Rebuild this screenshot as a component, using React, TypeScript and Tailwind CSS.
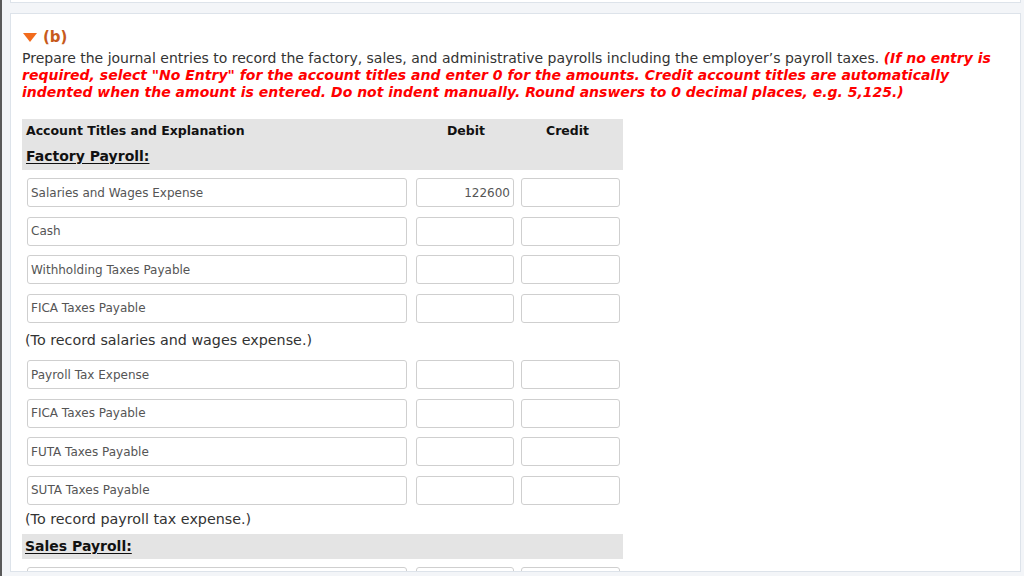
const FONT = "font-['DejaVu_Sans',Verdana,sans-serif]";

type Row = { title: string; debit?: string };

const salaryRows: Row[] = [
  { title: 'Salaries and Wages Expense', debit: '122600' },
  { title: 'Cash' },
  { title: 'Withholding Taxes Payable' },
  { title: 'FICA Taxes Payable' },
];

const taxRows: Row[] = [
  { title: 'Payroll Tax Expense' },
  { title: 'FICA Taxes Payable' },
  { title: 'FUTA Taxes Payable' },
  { title: 'SUTA Taxes Payable' },
];

function Box({ value, width, align }: { value?: string; width: string; align?: 'right' }) {
  return (
    <div
      className={`${width} h-[29px] border border-[#cfcfcf] rounded-[3px] bg-white flex items-center px-[3px] text-[12px] text-[#555] ${
        align === 'right' ? 'justify-end' : ''
      }`}
    >
      {value}
    </div>
  );
}

function EntryRow({ row }: { row: Row }) {
  return (
    <div className="h-[38.5px] flex items-start pl-[5px]">
      <Box value={row.title} width="w-[380px]" />
      <div className="ml-[9px]">
        <Box value={row.debit} width="w-[98px]" align="right" />
      </div>
      <div className="ml-[7px]">
        <Box width="w-[99px]" />
      </div>
    </div>
  );
}

export default function App() {
  return (
    <div className={`w-[1024px] h-[576px] overflow-hidden flex bg-[#f3f5f8] ${FONT}`}>
      <div className="w-[2px] bg-[#5a5a5a]" />
      <div className="w-[1020px] pl-[8px] pr-[1px] flex flex-col">
        <div className="h-[3px] bg-white border-x border-b border-[#dde3ea]" />
        <div className="mt-[10px] h-[559px] bg-white border border-[#dde3ea] pl-[11px] overflow-hidden">
          <div className="flex items-center h-[20px] mt-[13px]">
            <svg width="14" height="9" viewBox="0 0 14 9" className="ml-[1px]">
              <path d="M0 0 L14 0 L7 9 Z" fill="#f26b1d" />
            </svg>
            <span className="ml-[6px] text-[15px] font-bold text-[#c75a1c]">(b)</span>
          </div>
          <div className="mt-[3px] text-[14px] leading-[17px] text-[#333] whitespace-nowrap">
            Prepare the journal entries to record the factory, sales, and administrative payrolls including the
            employer’s payroll taxes.{' '}
            <span className="font-bold italic text-[#ff0000]">(If no entry is</span>
            <br />
            <span className="font-bold italic text-[#ff0000]">
              required, select "No Entry" for the account titles and enter 0 for the amounts. Credit account titles
              are automatically
            </span>
            <br />
            <span className="font-bold italic text-[#ff0000]">
              indented when the amount is entered. Do not indent manually. Round answers to 0 decimal places, e.g.
              5,125.)
            </span>
          </div>

          <div className="mt-[18px] w-[601px]">
            <div className="bg-[#e4e4e4] h-[51px] pl-[4px] pt-[2px] text-[#111]">
              <div className="flex h-[20px] items-center text-[12.5px] font-bold">
                <div className="w-[390px]">Account Titles and Explanation</div>
                <div className="w-[100px] text-center">Debit</div>
                <div className="w-[103px] text-center">Credit</div>
              </div>
              <div className="mt-[5px] text-[14px] font-bold underline underline-offset-2">Factory Payroll:</div>
            </div>
            <div className="pt-[8px]">
              {salaryRows.map((r, i) => (
                <EntryRow key={i} row={r} />
              ))}
            </div>
            <div className="-mt-[10px] h-[38px] flex items-center pl-[3px] text-[14.3px] text-[#333]">
              (To record salaries and wages expense.)
            </div>
            <div>
              {taxRows.map((r, i) => (
                <EntryRow key={i} row={r} />
              ))}
            </div>
            <div className="-mt-[9px] h-[29px] flex items-center pl-[3px] text-[14.3px] text-[#333]">
              (To record payroll tax expense.)
            </div>
            <div className="bg-[#e4e4e4] h-[25px] flex items-center pl-[3px] text-[14px] font-bold underline underline-offset-2 text-[#111]">
              Sales Payroll:
            </div>
            <div className="pt-[8px]">
              <EntryRow row={{ title: '' }} />
            </div>
          </div>
        </div>
      </div>
    </div>
  );
}
